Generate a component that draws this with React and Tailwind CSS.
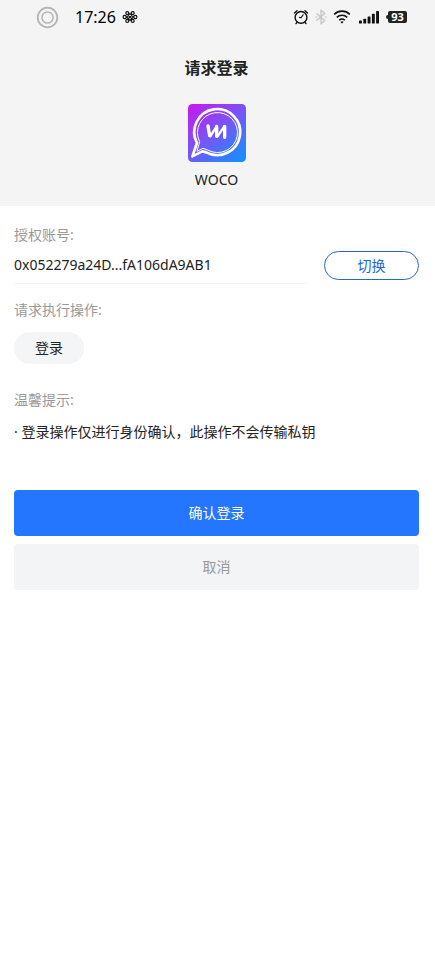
import React from "react";

function StatusBar() {
  return (
    <div className="flex h-[34px] items-center justify-between pr-7 pl-9 text-black">
      <div className="flex items-center">
        <svg className="mr-4 h-[23px] w-[23px]" viewBox="0 0 23 23" fill="none" stroke="#b5b5b5">
          <circle cx="11.5" cy="11.5" r="9.8" strokeWidth="1.8" />
          <circle cx="11.5" cy="11.5" r="5.6" strokeWidth="1.5" />
        </svg>
        <span className="mr-[6px] text-[16px] leading-5">17:26</span>
        {/* knot */}
        <svg className="h-4 w-4" viewBox="0 0 16 16" fill="none" stroke="#111" strokeWidth="1.2">
          <path d="M5.2 5.2 10.8 10.8M10.8 5.2 5.2 10.8M8 4.6 11.4 8 8 11.4 4.6 8z" />
          <circle cx="5.3" cy="4.1" r="1.5" />
          <circle cx="10.7" cy="4.1" r="1.5" />
          <circle cx="5.3" cy="11.9" r="1.5" />
          <circle cx="10.7" cy="11.9" r="1.5" />
          <circle cx="2.7" cy="8" r="1.6" />
          <circle cx="13.3" cy="8" r="1.6" />
        </svg>
      </div>

      <div className="flex items-center">
        {/* alarm */}
        <svg className="mr-1 h-4 w-4" viewBox="0 0 16 16" fill="none" stroke="#111" strokeWidth="1.4" strokeLinecap="round">
          <circle cx="8" cy="8.4" r="5.9" />
          <path d="M1.5 4 4 1.8M14.5 4 12 1.8M3.9 13.5 3 14.6M12.1 13.5l.9 1.1" />
          <path d="M10.2 5.8 8 8.9 6.4 8.2" strokeWidth="1.1" />
        </svg>
        {/* bluetooth */}
        <svg className="mr-1 h-4 w-4" viewBox="0 0 16 16" fill="none" stroke="#c9c9c9" strokeWidth="1.4" strokeLinejoin="round">
          <path d="M3.5 4.4 11.8 11.6 8 15V1l3.8 3.4L3.5 11.6" />
          <path d="M2.4 8h1.4M12.2 8h1.4" />
        </svg>
        {/* wifi */}
        <svg className="mr-2 h-4 w-[18px]" viewBox="0 0 18 16" fill="none" stroke="#111" strokeWidth="1.6">
          <path d="M1.2 5.4a11 11 0 0 1 15.6 0M3.8 8.4a7.4 7.4 0 0 1 10.4 0M6.2 11.2a4 4 0 0 1 5.6 0" />
          <path d="M7.4 12.9a2.4 2.4 0 0 1 3.2 0L9 14.6z" fill="#111" stroke="none" />
        </svg>
        {/* signal */}
        <svg className="mr-[7px] h-[14px] w-5" viewBox="0 0 20 14" fill="#111">
          <rect x="0" y="10.5" width="2.9" height="3" rx=".6" />
          <rect x="4.3" y="8.8" width="2.9" height="4.7" rx=".6" />
          <rect x="8.6" y="6.4" width="2.9" height="7.1" rx=".6" />
          <rect x="12.9" y="3.8" width="2.9" height="9.7" rx=".6" />
          <rect x="17.1" y="1" width="2.9" height="12.5" rx=".6" />
        </svg>
        {/* battery */}
        <span className="h-1 w-[2px] rounded-l-sm bg-[#222]" />
        <span className="flex h-[12px] w-[19px] items-center justify-center rounded-[2px] bg-[#222] text-[11px] leading-3 font-bold text-white">
          93
        </span>
      </div>
    </div>
  );
}

function Logo() {
  return (
    <svg className="h-[58px] w-[58px]" viewBox="0 0 174 174" fill="none">
      <defs>
        <linearGradient id="logoBg" x1="0.1" y1="0" x2="0.9" y2="1">
          <stop offset="0" stopColor="#c11df0" />
          <stop offset="0.5" stopColor="#7358f5" />
          <stop offset="1" stopColor="#158fff" />
        </linearGradient>
      </defs>
      <rect width="174" height="174" rx="13" fill="url(#logoBg)" />
      <g stroke="#fff" strokeLinejoin="round">
        <path d="M27 117A69 69 0 1 1 55 145L43 142 13 157Z" strokeWidth="8" />
        <path d="M35 113A60 60 0 1 1 59 138L45 133 27 142Z" strokeWidth="3" />
      </g>
      <g stroke="#fff" strokeLinecap="round">
        <path d="M60 66 65 95M86 67V97M110 67V100" strokeWidth="10" />
        <path d="M67 97 86 67M88 98 109 67" strokeWidth="7" />
      </g>
    </svg>
  );
}

export default function App() {
  return (
    <div className="min-h-screen bg-white font-['Noto_Sans','Noto_Sans_CJK_SC',sans-serif] text-[14px] leading-5 text-[#222]">
      <header className="bg-[#f4f4f4] pb-4">
        <StatusBar />
        <div className="flex flex-col items-center pt-[22px] pr-4 pl-[14px]">
          <h1 className="text-[16px] leading-6 font-bold">请求登录</h1>
          <div className="mt-6 mb-2">
            <Logo />
          </div>
          <p>WOCO</p>
        </div>
      </header>

      <main className="pt-[19px] pr-4 pl-[14px]">
        {/* account */}
        <p className="text-[#999]">授权账号:</p>
        <div className="flex items-start gap-4">
          <p className="flex-1 border-b border-[#f2f2f2] pt-[10px] pb-2">
            0x052279a24D...fA106dA9AB1
          </p>
          <button className="mt-[6px] h-[29px] w-[95px] rounded-full border border-[#2468c8] text-[#2468c8]">
            切换
          </button>
        </div>

        {/* operation */}
        <p className="mt-4 text-[#999]">请求执行操作:</p>
        <span className="mt-3 inline-block rounded-full bg-[#f3f5f7] px-[21px] py-[6px]">登录</span>

        {/* tips */}
        <p className="mt-[26px] text-[#999]">温馨提示:</p>
        <p className="mt-3">· 登录操作仅进行身份确认，此操作不会传输私钥</p>

        <div className="mt-12 flex flex-col gap-2">
          <button className="h-[46px] rounded bg-[#2475ff] text-white">确认登录</button>
          <button className="h-[46px] rounded bg-[#f3f4f6] text-[#999]">取消</button>
        </div>
      </main>
    </div>
  );
}
